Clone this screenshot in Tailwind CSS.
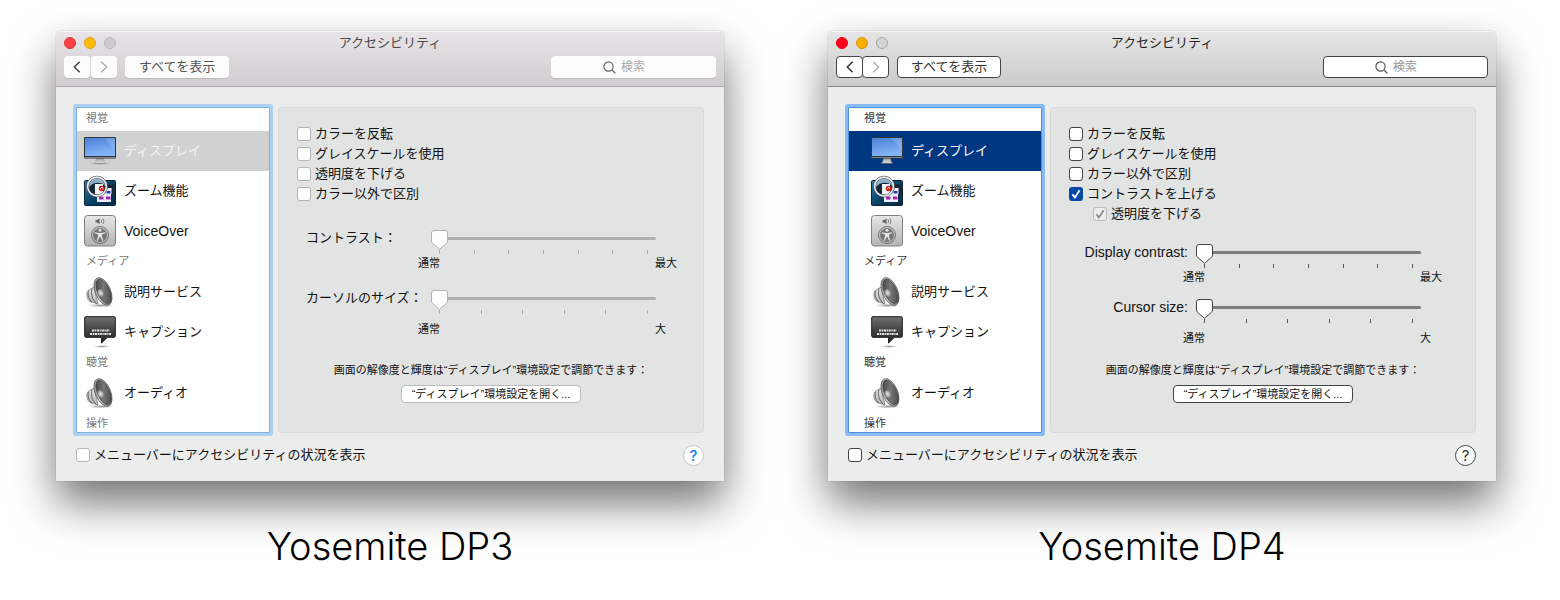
<!DOCTYPE html>
<html lang="ja">
<head>
<meta charset="utf-8">
<title>Yosemite アクセシビリティ</title>
<script src="https://cdn.jsdelivr.net/npm/@tailwindcss/browser@4"></script>
</head>
<body class="min-h-screen bg-white pt-[31px] pr-16 pl-14 font-['Liberation_Sans','Noto_Sans_CJK_JP',sans-serif] text-[13px] text-[#111]">

<svg class="absolute size-0" aria-hidden="true">
  <defs>
    <linearGradient id="gScreen" x1="0" y1="0" x2="0.3" y2="1"><stop offset="0" stop-color="#4a80d8"/><stop offset="1" stop-color="#82b4f5"/></linearGradient>
    <linearGradient id="gMetal" x1="0" y1="0" x2="0" y2="1"><stop offset="0" stop-color="#e6e6e6"/><stop offset="1" stop-color="#b4b4b4"/></linearGradient>
    <linearGradient id="gStand" x1="0" y1="0" x2="0" y2="1"><stop offset="0" stop-color="#999"/><stop offset="1" stop-color="#e2e2e2"/></linearGradient>
    <linearGradient id="gSea" x1="0" y1="0" x2="1" y2="1"><stop offset="0" stop-color="#2a7fae"/><stop offset="0.5" stop-color="#0b4368"/><stop offset="1" stop-color="#04263f"/></linearGradient>
    <linearGradient id="gDark" x1="0" y1="0" x2="0" y2="1"><stop offset="0" stop-color="#707070"/><stop offset="0.5" stop-color="#444"/><stop offset="1" stop-color="#252525"/></linearGradient>
    <linearGradient id="gCone" x1="0" y1="0" x2="1" y2="1"><stop offset="0" stop-color="#383838"/><stop offset="0.5" stop-color="#777"/><stop offset="1" stop-color="#444"/></linearGradient>
    <linearGradient id="gRim" x1="0" y1="0" x2="1" y2="1"><stop offset="0" stop-color="#777"/><stop offset="0.4" stop-color="#ccc"/><stop offset="1" stop-color="#555"/></linearGradient>
    <radialGradient id="gBall"><stop offset="0" stop-color="#eee"/><stop offset="1" stop-color="#8a8a8a"/></radialGradient>
    <radialGradient id="gSoft"><stop offset="0" stop-color="#000" stop-opacity="0.4"/><stop offset="1" stop-color="#000" stop-opacity="0"/></radialGradient>
  </defs>
  <symbol id="display" viewBox="0 0 32 32">
    <ellipse cx="16" cy="28.500" rx="10" ry="1.500" fill="url(#gSoft)"/>
    <path d="M12.500 23h7l.8 4.200 1.700 1H10l1.700-1z" fill="url(#gStand)" stroke="#888" stroke-width=".4"/>
    <rect x="0" y="2" width="32" height="21.500" rx="1" fill="#2f343b"/>
    <rect x="1" y="3" width="30" height="18" fill="url(#gScreen)"/>
    <path d="M20 3h11v12z" fill="#fff" opacity=".14"/>
    <path d="M.5 22h31v1H.5z" fill="#7d8794"/>
  </symbol>
  <symbol id="zoom" viewBox="0 0 32 32">
    <rect x=".5" y="5.500" width="31" height="25" rx="1" fill="url(#gSea)" stroke="#062338"/>
    <path d="M18.500 9.500h12v10h-12z" fill="#1b2635"/>
    <path d="M13 13h14v14H13z" fill="#eef"/>
    <path d="M21.500 13h6v6h-6z" fill="#f5f6ff"/>
    <path d="M22.500 16h4v2.500h-4z" fill="#2838c0"/>
    <path d="M15 21.500h4.500v3H15zM22 21.500h4.500v3H22z" fill="#a328a8"/>
    <circle cx="13" cy="11.500" r="9.300" fill="#8fb0c6"/>
    <path d="M5 12c4-5 12-6 16-1a9 9 0 0 1-4 8.500L10 20a9 9 0 0 1-5-8z" fill="#12273a"/>
    <path d="M11 9h8v9l-4 2-4-1z" fill="#f2f4f8"/>
    <circle cx="17.500" cy="13.500" r="2.800" fill="#e0221c"/>
    <path d="m16 14 2-2 1 2" stroke="#fff" stroke-width=".7" fill="none"/>
    <circle cx="13" cy="11.500" r="9.400" fill="none" stroke="#555" stroke-width="2.600"/>
    <circle cx="13" cy="11.500" r="9.400" fill="none" stroke="#e4e7ea" stroke-width="1.600"/>
  </symbol>
  <symbol id="voice" viewBox="0 0 32 32">
    <rect x=".5" y=".5" width="31" height="30.500" rx="3" fill="url(#gMetal)" stroke="#808080"/>
    <path d="M11.500 5h1.700l2.300-1.800v6L13.200 7.500h-1.700z" fill="#666"/>
    <path d="M17 4.500q1.200 1.800 0 3.500M19 3.500q1.800 2.700 0 5.500" stroke="#666" fill="none" stroke-width=".8"/>
    <circle cx="16" cy="20" r="8.500" fill="none" stroke="#707070" stroke-width="1"/>
    <circle cx="16" cy="20" r="7" fill="#777"/>
    <circle cx="16" cy="15.300" r="1.400" fill="#e8e8e8"/>
    <path d="m11 17.200 3.500.8h3l3.500-.8v1.200l-3 .9v2.200l1.200 4-1 .3-1.900-4h-.6l-1.900 4-1-.3 1.200-4v-2.200l-3-.9z" fill="#e8e8e8"/>
  </symbol>
  <symbol id="speaker" viewBox="0 0 32 32">
    <ellipse cx="17" cy="29.500" rx="13" ry="2" fill="url(#gSoft)"/>
    <path d="M10 11 4 14.500c-2 3-1.500 8.500 2 11l8 2.500z" fill="url(#gMetal)" stroke="#777" stroke-width=".7"/>
    <path d="M4.500 15c-1 4 0 8 3.500 11M8 12.500c-1.500 5 0 11 4.500 15" fill="none" stroke="#555" stroke-width=".9"/>
    <ellipse cx="19" cy="15.500" rx="7.600" ry="14.700" transform="rotate(-23 19 15.500)" fill="url(#gRim)" stroke="#444" stroke-width=".6"/>
    <ellipse cx="19.400" cy="15.300" rx="6" ry="13" transform="rotate(-23 19.400 15.300)" fill="url(#gCone)" stroke="#333" stroke-width=".5"/>
    <ellipse cx="16.700" cy="17" rx="2.900" ry="4" transform="rotate(-23 16.700 17)" fill="url(#gBall)"/>
  </symbol>
  <symbol id="caption" viewBox="0 0 32 32">
    <ellipse cx="18" cy="30.500" rx="9" ry="1.500" fill="url(#gSoft)"/>
    <path d="M2 .7h28A1.300 1.300 0 0 1 31.300 2v18a1.500 1.500 0 0 1-1.300 1.300h-6.500L17.500 27v-5.700H2A1.500 1.500 0 0 1 .7 20V2A1.300 1.300 0 0 1 2 .7z" fill="url(#gDark)" stroke="#1a1a1a"/>
    <path d="M8 14.500h17.500M6 18h21" stroke="#e8e8e8" stroke-width="1.800" stroke-dasharray="2.200 .7 1.200 .7"/>
  </symbol>
  <symbol id="thumb" viewBox="0 0 17 20">
    <path d="M3 .5h11A2.500 2.500 0 0 1 16.500 3v8c0 1-.3 1.600-1 2.300L8.500 19.300 1.500 13.300c-.7-.7-1-1.300-1-2.300V3A2.500 2.500 0 0 1 3 .5z" fill="#fff" stroke="currentColor"/>
  </symbol>
  <symbol id="glass" viewBox="0 0 13 13"><circle cx="5.500" cy="5.500" r="4.600" fill="none" stroke="currentColor" stroke-width="1.200"/><path d="m8.800 8.800 3.600 3.600" stroke="currentColor" stroke-width="1.300"/></symbol>
  <symbol id="left" viewBox="0 0 8 12"><path d="M6.700 .8 1.300 6l5.400 5.200" fill="none" stroke="currentColor" stroke-width="1.500"/></symbol>
  <symbol id="right" viewBox="0 0 8 12"><path d="M1.300 .8 6.700 6l-5.400 5.200" fill="none" stroke="currentColor" stroke-width="1.300"/></symbol>
  <symbol id="tick" viewBox="0 0 14 14"><path d="m3.400 7.400 2.500 3L10.600 3.300" fill="none" stroke="currentColor" stroke-width="1.800"/></symbol>
</svg>

<main class="flex gap-[104px]">

  <!-- DP3 -->
  <figure class="min-w-0 flex-1">
    <section class="rounded-t-[5px] bg-[#ebedec] shadow-[0_0_1px_rgba(0,0,0,0.5),0_22px_44px_rgba(0,0,0,0.55)]">
      <header class="h-14 rounded-t-[5px] border-b border-[#aaa6aa] bg-linear-to-b from-[#e8e4e8] to-[#d0ccd0] px-2 shadow-[inset_0_1px_0_#f6f4f6]">
        <div class="grid h-6 grid-cols-[1fr_auto_1fr] items-center">
          <div class="flex gap-2">
            <button aria-label="閉じる" class="size-3 rounded-full border border-[#de3436] bg-[#fc4244]"></button>
            <button aria-label="しまう" class="size-3 rounded-full border border-[#dfa210] bg-[#fdbc0a]"></button>
            <button aria-label="拡大" class="size-3 rounded-full border border-[#b5b3b5] bg-[#cdcbcd]"></button>
          </div>
          <h1 class="text-[#4a484a]">アクセシビリティ</h1>
        </div>
        <div class="mt-px flex items-center">
          <button aria-label="戻る" class="flex h-[22px] w-[26px] items-center justify-center rounded bg-[#fcfcfc] text-[#444] shadow-[0_1px_0_#bbb8bb]"><svg class="h-3 w-2"><use href="#left"/></svg></button>
          <button aria-label="進む" class="ml-px flex h-[22px] w-[26px] items-center justify-center rounded bg-[#fcfcfc] text-[#aaa] shadow-[0_1px_0_#bbb8bb]"><svg class="h-3 w-2"><use href="#right"/></svg></button>
          <button class="ml-2 h-[22px] w-[104px] rounded bg-[#fcfcfc] leading-[22px] text-[#555] shadow-[0_1px_0_#bbb8bb]">すべてを表示</button>
          <label class="relative ml-auto text-[#666]">
            <svg class="absolute top-[5px] left-[52px] size-[13px]"><use href="#glass"/></svg>
            <input type="search" aria-label="検索" placeholder="検索" class="block h-[22px] w-[165px] rounded bg-[#fcfcfc] pl-[70px] text-xs shadow-[0_1px_0_#bbb8bb] placeholder:text-[#aaa]">
          </label>
        </div>
      </header>

      <div class="flex gap-2 px-5 pt-5">
        <nav class="w-[194px] shrink-0 rounded-[1px] border border-[#7fb2e0] bg-white shadow-[0_0_0_3px_#abd0f1]">
          <h2 class="h-[23px] pl-[9px] text-[11px] leading-5 text-[#777]">視覚</h2>
          <button class="flex h-10 w-full items-center gap-2 bg-[#d2d1d2] pl-[7px] text-[#f4f4f8]"><svg class="size-8"><use href="#display"/></svg>ディスプレイ</button>
          <button class="flex h-10 w-full items-center gap-2 pl-[7px]"><svg class="size-8"><use href="#zoom"/></svg>ズーム機能</button>
          <button class="flex h-10 w-full items-center gap-2 pl-[7px] text-sm"><svg class="size-8"><use href="#voice"/></svg>VoiceOver</button>
          <h2 class="h-[21px] pl-[9px] text-[11px] leading-5 text-[#777]">メディア</h2>
          <button class="flex h-10 w-full items-center gap-2 pl-[7px]"><svg class="size-8"><use href="#speaker"/></svg>説明サービス</button>
          <button class="flex h-10 w-full items-center gap-2 pl-[7px]"><svg class="size-8"><use href="#caption"/></svg>キャプション</button>
          <h2 class="h-[21px] pl-[9px] text-[11px] leading-5 text-[#777]">聴覚</h2>
          <button class="flex h-10 w-full items-center gap-2 pl-[7px]"><svg class="size-8"><use href="#speaker"/></svg>オーディオ</button>
          <h2 class="h-[19px] pl-[9px] text-[11px] leading-5 text-[#777]">操作</h2>
        </nav>

        <div class="min-w-0 flex-1 rounded-sm border border-[#d8dad9] bg-[#e2e4e3] pt-4">
          <div class="pl-[18px]">
            <label class="flex h-5 items-center gap-1"><input type="checkbox" class="size-[14px] appearance-none rounded-[3px] border border-[#b4b6b5] bg-white">カラーを反転</label>
            <label class="flex h-5 items-center gap-1"><input type="checkbox" class="size-[14px] appearance-none rounded-[3px] border border-[#b4b6b5] bg-white">グレイスケールを使用</label>
            <label class="flex h-5 items-center gap-1"><input type="checkbox" class="size-[14px] appearance-none rounded-[3px] border border-[#b4b6b5] bg-white">透明度を下げる</label>
            <label class="flex h-5 items-center gap-1"><input type="checkbox" class="size-[14px] appearance-none rounded-[3px] border border-[#b4b6b5] bg-white">カラー以外で区別</label>
          </div>
          <div class="mt-[26px] flex pr-[47px]">
            <label for="c3" class="w-[152px] shrink-0 pl-[27px] leading-4 whitespace-nowrap">コントラスト：</label>
            <div class="flex-1">
              <div class="relative">
                <input id="c3" type="range" min="0" max="6" value="0" class="block h-[17px] w-full appearance-none bg-transparent [&::-webkit-slider-runnable-track]:h-[3px] [&::-webkit-slider-runnable-track]:rounded-full [&::-webkit-slider-runnable-track]:bg-[#b0b2b1] [&::-webkit-slider-thumb]:size-[3px] [&::-webkit-slider-thumb]:appearance-none [&::-webkit-slider-thumb]:bg-transparent">
                <svg class="pointer-events-none absolute top-0 left-0 h-5 w-[17px] text-[#b0b2b1]"><use href="#thumb"/></svg>
              </div>
              <div class="mx-2 mt-[3px] flex h-1 justify-between"><i class="w-px bg-[#aaa]"></i><i class="w-px bg-[#aaa]"></i><i class="w-px bg-[#aaa]"></i><i class="w-px bg-[#aaa]"></i><i class="w-px bg-[#aaa]"></i><i class="w-px bg-[#aaa]"></i><i class="w-px bg-[#aaa]"></i></div>
              <div class="-mr-[21px] -ml-[13px] mt-px flex justify-between text-[11px] leading-4"><span>通常</span><span class="w-[22px]">最大</span></div>
            </div>
          </div>
          <div class="mt-[19px] flex pr-[47px]">
            <label for="s3" class="w-[152px] shrink-0 pl-[27px] leading-4 whitespace-nowrap">カーソルのサイズ：</label>
            <div class="flex-1">
              <div class="relative">
                <input id="s3" type="range" min="0" max="5" value="0" class="block h-[17px] w-full appearance-none bg-transparent [&::-webkit-slider-runnable-track]:h-[3px] [&::-webkit-slider-runnable-track]:rounded-full [&::-webkit-slider-runnable-track]:bg-[#b0b2b1] [&::-webkit-slider-thumb]:size-[3px] [&::-webkit-slider-thumb]:appearance-none [&::-webkit-slider-thumb]:bg-transparent">
                <svg class="pointer-events-none absolute top-0 left-0 h-5 w-[17px] text-[#b0b2b1]"><use href="#thumb"/></svg>
              </div>
              <div class="mx-2 mt-[3px] flex h-1 justify-between"><i class="w-px bg-[#aaa]"></i><i class="w-px bg-[#aaa]"></i><i class="w-px bg-[#aaa]"></i><i class="w-px bg-[#aaa]"></i><i class="w-px bg-[#aaa]"></i><i class="w-px bg-[#aaa]"></i></div>
              <div class="-mr-[21px] -ml-[13px] mt-[7px] flex justify-between text-[11px] leading-4"><span>通常</span><span class="w-[22px]">大</span></div>
            </div>
          </div>
          <p class="mt-[25px] text-center text-[11px] leading-4">画面の解像度と輝度は“ディスプレイ”環境設定で調節できます：</p>
          <button class="mx-auto mt-[7px] block h-[18px] w-[180px] rounded border border-[#bbb] bg-white text-[11px] leading-4 whitespace-nowrap">“ディスプレイ”環境設定を開く...</button>
        </div>
      </div>

      <footer class="flex h-12 items-center justify-between px-5 pb-1">
        <label class="flex items-center gap-1"><input type="checkbox" class="size-[14px] appearance-none rounded-[3px] border border-[#b4b6b5] bg-white">メニューバーにアクセシビリティの状況を表示</label>
        <button aria-label="ヘルプ" class="size-[21px] rounded-full border border-[#c4c4c4] bg-white font-['Inter',sans-serif] text-[15px] leading-[19px] font-medium text-[#1080ff]">?</button>
      </footer>
    </section>
    <figcaption class="mt-[41px] text-center font-['Inter',sans-serif] text-[38px] leading-[48px] font-light text-black">Yosemite DP3</figcaption>
  </figure>

  <!-- DP4 -->
  <figure class="min-w-0 flex-1">
    <section class="rounded-t-[5px] bg-[#ebedec] shadow-[0_0_1px_rgba(0,0,0,0.5),0_22px_44px_rgba(0,0,0,0.55)]">
      <header class="h-14 rounded-t-[5px] border-b border-[#858585] bg-linear-to-b from-[#e6e6e6] to-[#cbcbcb] px-2 shadow-[inset_0_1px_0_#f4f4f4]">
        <div class="grid h-6 grid-cols-[1fr_auto_1fr] items-center">
          <div class="flex gap-2">
            <button aria-label="閉じる" class="size-3 rounded-full border border-[#ee0018] bg-[#ff0019]"></button>
            <button aria-label="しまう" class="size-3 rounded-full border border-[#d99310] bg-[#ffae00]"></button>
            <button aria-label="拡大" class="size-3 rounded-full border border-[#a2a2a2] bg-[#d4d4d4]"></button>
          </div>
          <h1 class="text-[#222]">アクセシビリティ</h1>
        </div>
        <div class="mt-px flex items-center">
          <button aria-label="戻る" class="flex h-[22px] w-[27px] items-center justify-center rounded border border-[#444] bg-white text-[#333]"><svg class="h-3 w-2"><use href="#left"/></svg></button>
          <button aria-label="進む" class="-ml-px flex h-[22px] w-[27px] items-center justify-center rounded border border-[#444] bg-white text-[#aaa]"><svg class="h-3 w-2"><use href="#right"/></svg></button>
          <button class="ml-2 h-[22px] w-[104px] rounded border border-[#444] bg-white leading-5 text-[#333]">すべてを表示</button>
          <label class="relative ml-auto text-[#555]">
            <svg class="absolute top-[5px] left-[52px] size-[13px]"><use href="#glass"/></svg>
            <input type="search" aria-label="検索" placeholder="検索" class="block h-[22px] w-[165px] rounded border border-[#444] bg-white pl-[69px] text-xs placeholder:text-[#999]">
          </label>
        </div>
      </header>

      <div class="flex gap-2 px-5 pt-5">
        <nav class="w-[194px] shrink-0 rounded-[1px] border border-[#4a90e0] bg-white shadow-[0_0_0_3px_#88bbf1]">
          <h2 class="h-[23px] pl-[15px] text-[11px] leading-5 text-[#333]">視覚</h2>
          <button class="flex h-10 w-full items-center gap-2 bg-[#003781] pl-[22px] text-white"><svg class="size-8"><use href="#display"/></svg>ディスプレイ</button>
          <button class="flex h-10 w-full items-center gap-2 pl-[22px]"><svg class="size-8"><use href="#zoom"/></svg>ズーム機能</button>
          <button class="flex h-10 w-full items-center gap-2 pl-[22px] text-sm"><svg class="size-8"><use href="#voice"/></svg>VoiceOver</button>
          <h2 class="h-[21px] pl-[15px] text-[11px] leading-5 text-[#333]">メディア</h2>
          <button class="flex h-10 w-full items-center gap-2 pl-[22px]"><svg class="size-8"><use href="#speaker"/></svg>説明サービス</button>
          <button class="flex h-10 w-full items-center gap-2 pl-[22px]"><svg class="size-8"><use href="#caption"/></svg>キャプション</button>
          <h2 class="h-[21px] pl-[15px] text-[11px] leading-5 text-[#333]">聴覚</h2>
          <button class="flex h-10 w-full items-center gap-2 pl-[22px]"><svg class="size-8"><use href="#speaker"/></svg>オーディオ</button>
          <h2 class="h-[19px] pl-[15px] text-[11px] leading-5 text-[#333]">操作</h2>
        </nav>

        <div class="min-w-0 flex-1 rounded-sm border border-[#d8dad9] bg-[#e2e4e3] pt-4">
          <div class="pl-[18px]">
            <label class="flex h-5 items-center gap-1"><input type="checkbox" class="size-[14px] appearance-none rounded-[3px] border border-[#444] bg-white">カラーを反転</label>
            <label class="flex h-5 items-center gap-1"><input type="checkbox" class="size-[14px] appearance-none rounded-[3px] border border-[#444] bg-white">グレイスケールを使用</label>
            <label class="flex h-5 items-center gap-1"><input type="checkbox" class="size-[14px] appearance-none rounded-[3px] border border-[#444] bg-white">カラー以外で区別</label>
            <label class="flex h-5 items-center gap-1"><span class="grid"><input type="checkbox" checked class="col-start-1 row-start-1 size-[14px] appearance-none rounded-[3px] bg-[#0848a8]"><svg class="pointer-events-none col-start-1 row-start-1 size-[14px] text-white"><use href="#tick"/></svg></span>コントラストを上げる</label>
            <label class="flex h-5 items-center gap-1 pl-6"><span class="grid"><input type="checkbox" checked disabled class="col-start-1 row-start-1 size-[14px] appearance-none rounded-[3px] border border-[#b8baba] bg-[#eceeed]"><svg class="pointer-events-none col-start-1 row-start-1 size-[14px] text-[#8c8e8d]"><use href="#tick"/></svg></span>透明度を下げる</label>
          </div>
          <div class="mt-5 flex pr-[54px]">
            <label for="c4" class="w-[145px] shrink-0 pr-2 text-right text-sm leading-[17px] whitespace-nowrap">Display contrast:</label>
            <div class="flex-1">
              <div class="relative">
                <input id="c4" type="range" min="0" max="6" value="0" class="block h-[17px] w-full appearance-none bg-transparent [&::-webkit-slider-runnable-track]:h-[3px] [&::-webkit-slider-runnable-track]:rounded-full [&::-webkit-slider-runnable-track]:bg-[#7c7e7d] [&::-webkit-slider-thumb]:size-[3px] [&::-webkit-slider-thumb]:appearance-none [&::-webkit-slider-thumb]:bg-transparent">
                <svg class="pointer-events-none absolute top-0 left-0 h-5 w-[17px] text-[#444]"><use href="#thumb"/></svg>
              </div>
              <div class="mx-2 mt-[3px] flex h-1 justify-between"><i class="w-px bg-[#555]"></i><i class="w-px bg-[#555]"></i><i class="w-px bg-[#555]"></i><i class="w-px bg-[#555]"></i><i class="w-px bg-[#555]"></i><i class="w-px bg-[#555]"></i><i class="w-px bg-[#555]"></i></div>
              <div class="-mr-[21px] -ml-[13px] mt-px flex justify-between text-[11px] leading-4"><span>通常</span><span class="w-[22px]">最大</span></div>
            </div>
          </div>
          <div class="mt-[14px] flex pr-[54px]">
            <label for="s4" class="w-[145px] shrink-0 pr-2 text-right text-sm leading-[17px] whitespace-nowrap">Cursor size:</label>
            <div class="flex-1">
              <div class="relative">
                <input id="s4" type="range" min="0" max="5" value="0" class="block h-[17px] w-full appearance-none bg-transparent [&::-webkit-slider-runnable-track]:h-[3px] [&::-webkit-slider-runnable-track]:rounded-full [&::-webkit-slider-runnable-track]:bg-[#7c7e7d] [&::-webkit-slider-thumb]:size-[3px] [&::-webkit-slider-thumb]:appearance-none [&::-webkit-slider-thumb]:bg-transparent">
                <svg class="pointer-events-none absolute top-0 left-0 h-5 w-[17px] text-[#444]"><use href="#thumb"/></svg>
              </div>
              <div class="mx-2 mt-[3px] flex h-1 justify-between"><i class="w-px bg-[#555]"></i><i class="w-px bg-[#555]"></i><i class="w-px bg-[#555]"></i><i class="w-px bg-[#555]"></i><i class="w-px bg-[#555]"></i><i class="w-px bg-[#555]"></i></div>
              <div class="-mr-[21px] -ml-[13px] mt-[7px] flex justify-between text-[11px] leading-4"><span>通常</span><span class="w-[22px]">大</span></div>
            </div>
          </div>
          <p class="mt-4 text-center text-[11px] leading-4">画面の解像度と輝度は“ディスプレイ”環境設定で調節できます：</p>
          <button class="mx-auto mt-[7px] block h-[18px] w-[180px] rounded border border-[#444] bg-white text-[11px] leading-4 whitespace-nowrap">“ディスプレイ”環境設定を開く...</button>
        </div>
      </div>

      <footer class="flex h-12 items-center justify-between px-5 pb-1">
        <label class="flex items-center gap-1"><input type="checkbox" class="size-[14px] appearance-none rounded-[3px] border border-[#444] bg-white">メニューバーにアクセシビリティの状況を表示</label>
        <button aria-label="ヘルプ" class="size-[21px] rounded-full border border-[#444] bg-white font-['Inter',sans-serif] text-[15px] leading-[19px] text-[#333]">?</button>
      </footer>
    </section>
    <figcaption class="mt-[41px] text-center font-['Inter',sans-serif] text-[38px] leading-[48px] font-light text-black">Yosemite DP4</figcaption>
  </figure>
</main>
</body>
</html>
